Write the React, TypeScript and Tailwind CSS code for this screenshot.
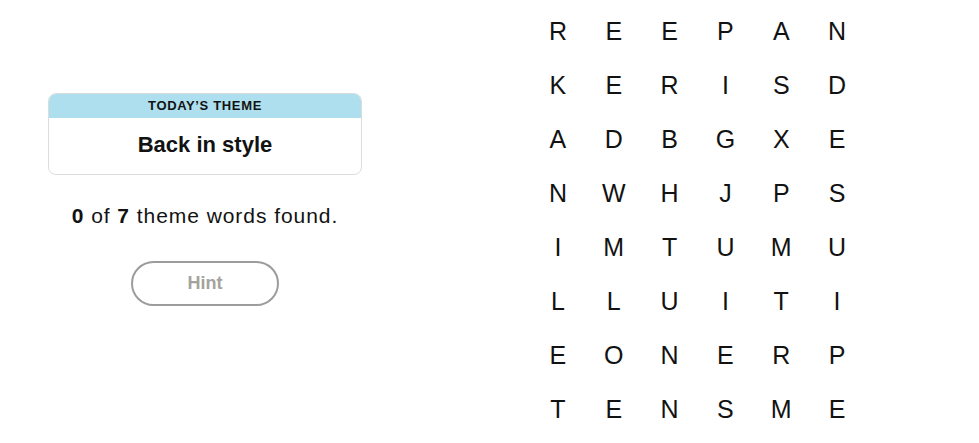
const letters = [
  "REEPAN",
  "KERISD",
  "ADBGXE",
  "NWHJPS",
  "IMTUMU",
  "LLUITI",
  "EONERP",
  "TENSME",
];

export default function App() {
  return (
    <div className="w-[979px] h-[443px] bg-white flex text-[#121212] font-['Liberation_Sans',Arial,sans-serif] overflow-hidden">
      {/* Left panel */}
      <div className="w-[410px] flex flex-col items-center pt-[93px]">
        <div className="w-[314px] rounded-[8px] border border-[#dcdcdc] overflow-hidden">
          <div className="h-[24px] bg-[#aedfee] flex items-center justify-center text-[13px] font-semibold tracking-[0.05em]">
            TODAY’S THEME
          </div>
          <div className="h-[56px] flex items-center justify-center text-[22px] font-bold pb-[3px]">
            Back in style
          </div>
        </div>
        <p className="mt-[27px] text-[21px] leading-[28px] tracking-[0.045em]">
          <b>0</b> of <b>7</b> theme words found.
        </p>
        <button className="mt-[31px] w-[148px] h-[45px] rounded-full border-2 border-[#9c9c9c] text-[18px] font-bold text-[#a3a39c]">
          Hint
        </button>
      </div>

      {/* Letter grid */}
      <div className="ml-[120px] pt-[5px]">
        <div className="grid grid-cols-6 w-[335px]">
          {letters.map((row, r) =>
            row.split("").map((ch, c) => (
              <div key={`${r}-${c}`} className="h-[54px] flex items-center justify-center text-[25px]">
                {ch}
              </div>
            ))
          )}
        </div>
      </div>
    </div>
  );
}
